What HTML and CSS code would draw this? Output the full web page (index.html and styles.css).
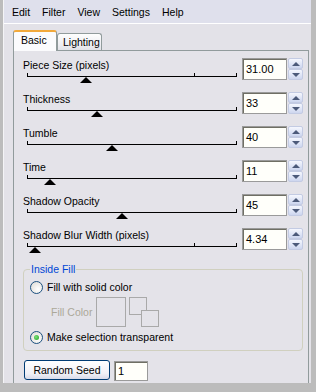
FILE: index.html
```html
<!DOCTYPE html>
<html lang="en">
<head>
    <meta charset="UTF-8">
    <title>Jigsaw Puzzle</title>
    <link rel="stylesheet" href="styles.css">
</head>
<body>

    <div class="window">
        <div class="menubar">
            <span class="menu">Edit</span>
            <span class="menu">Filter</span>
            <span class="menu">View</span>
            <span class="menu">Settings</span>
            <span class="menu">Help</span>
        </div>

        <div class="dialog">
            <div class="tabs">
                <div class="tab active">Basic</div>
                <div class="tab">Lighting</div>
            </div>

            <div class="panel">
                <div class="row">
                    <div class="control">
                        <div class="label">Piece Size (pixels)</div>
                        <div class="slider">
                            <span class="mid"></span>
                            <span class="thumb" style="left: 53px"></span>
                        </div>
                    </div>
                    <div class="field">31.00</div>
                    <div class="arrows"><span class="arrow up"></span><span class="arrow down"></span></div>
                </div>

                <div class="row">
                    <div class="control">
                        <div class="label">Thickness</div>
                        <div class="slider">
                            <span class="thumb" style="left: 64px"></span>
                        </div>
                    </div>
                    <div class="field">33</div>
                    <div class="arrows"><span class="arrow up"></span><span class="arrow down"></span></div>
                </div>

                <div class="row">
                    <div class="control">
                        <div class="label">Tumble</div>
                        <div class="slider">
                            <span class="thumb" style="left: 79px"></span>
                        </div>
                    </div>
                    <div class="field">40</div>
                    <div class="arrows"><span class="arrow up"></span><span class="arrow down"></span></div>
                </div>

                <div class="row">
                    <div class="control">
                        <div class="label">Time</div>
                        <div class="slider">
                            <span class="thumb" style="left: 17px"></span>
                        </div>
                    </div>
                    <div class="field">11</div>
                    <div class="arrows"><span class="arrow up"></span><span class="arrow down"></span></div>
                </div>

                <div class="row">
                    <div class="control">
                        <div class="label">Shadow Opacity</div>
                        <div class="slider">
                            <span class="thumb" style="left: 89px"></span>
                        </div>
                    </div>
                    <div class="field">45</div>
                    <div class="arrows"><span class="arrow up"></span><span class="arrow down"></span></div>
                </div>

                <div class="row">
                    <div class="control">
                        <div class="label">Shadow Blur Width (pixels)</div>
                        <div class="slider">
                            <span class="mid"></span>
                            <span class="thumb" style="left: 2px"></span>
                        </div>
                    </div>
                    <div class="field">4.34</div>
                    <div class="arrows"><span class="arrow up"></span><span class="arrow down"></span></div>
                </div>

                <fieldset class="group">
                    <legend>Inside Fill</legend>
                    <div class="option">
                        <span class="radio"></span>
                        <span>Fill with solid color</span>
                    </div>
                    <div class="fill-row">
                        <span class="fill-label">Fill Color</span>
                        <span class="swatch"></span>
                        <span class="pair">
                            <span class="small first"></span>
                            <span class="small second"></span>
                        </span>
                    </div>
                    <div class="option">
                        <span class="radio checked"></span>
                        <span>Make selection transparent</span>
                    </div>
                </fieldset>

                <div class="seed">
                    <div class="button">Random Seed</div>
                    <div class="seed-field">1</div>
                </div>
            </div>
        </div>
    </div>

</body>
</html>
```

FILE: styles.css
```css
* {
    box-sizing: border-box;
}

body {
    margin: 0;
    background: #bcbcbc;
    font-family: "Liberation Sans", Arial, sans-serif;
    font-size: 10.5px;
    color: #000;
    overflow: hidden;
}

.window {
    width: 308px;
    height: 383px;
    margin-left: 3px;
    border-left: 1px solid #f4f4f6;
    background: #e3e2e8;
    display: flex;
    flex-direction: column;
    overflow: hidden;
}

.menubar {
    height: 24px;
    flex: none;
    background: #dfe0ec;
    border-bottom: 1px solid #fff;
    display: flex;
    padding-left: 2px;
}

.menu {
    padding: 2px 6px 0;
    line-height: 21px;
}

.dialog {
    flex: none;
    padding: 6px 2px 0 9px;
    display: flex;
    flex-direction: column;
}

/* tabs */

.tabs {
    height: 20px;
    display: flex;
    align-items: flex-end;
}

.tab {
    height: 17px;
    width: 45px;
    padding-left: 5px;
    line-height: 16px;
    border: 1px solid #919b9c;
    border-bottom: none;
    border-radius: 3px 3px 0 0;
    background: linear-gradient(#fefefe, #f0f0f4 60%, #e2e2e8);
}

.tab.active {
    height: 21px;
    width: 44px;
    padding-left: 7px;
    margin-bottom: -1px;
    line-height: 17px;
    border-top: 2px solid #f2a93b;
    background: #fbfbfd;
    position: relative;
    z-index: 1;
}

.panel {
    width: 296px;
    height: 345px;
    border: 1px solid #919b9c;
    padding: 7px 5px 0 9px;
    background: #e4e3e9;
}

/* slider rows */

.row {
    display: flex;
    height: 34px;
}

.control {
    width: 219px;
}

.label {
    height: 14px;
    line-height: 14px;
    white-space: nowrap;
}

.slider {
    position: relative;
    width: 210px;
    height: 16px;
    margin: 4px 0 0 4px;
    border-top: 1px solid #000;
}

.slider::before,
.slider::after,
.mid {
    content: "";
    position: absolute;
    top: -4px;
    width: 1px;
    height: 3px;
    background: #000;
}

.slider::before {
    left: 0;
}

.slider::after {
    right: 0;
}

.mid {
    left: 167px;
}

.thumb {
    position: absolute;
    top: 0;
    width: 0;
    height: 0;
    border-left: 6px solid transparent;
    border-right: 6px solid transparent;
    border-bottom: 6px solid #000;
}

.field {
    width: 45px;
    height: 22px;
    padding-left: 3px;
    line-height: 20px;
    font-size: 11px;
    border: 1px solid #9a9a9a;
    box-shadow: inset 1px 1px 0 #6f6f64;
    background: #fffffa;
}

.arrows {
    width: 15px;
    height: 22px;
    margin-left: 1px;
    display: flex;
    flex-direction: column;
}

.arrow {
    height: 11px;
    display: flex;
    align-items: center;
    justify-content: center;
    border: 1px solid #c3cbe3;
    border-radius: 2px;
    background: linear-gradient(#f5f7fe, #cdd6ef);
}

.arrow::before {
    content: "";
    width: 0;
    height: 0;
    border-left: 4px solid transparent;
    border-right: 4px solid transparent;
}

.up::before {
    border-bottom: 4px solid #4c5a7a;
}

.down::before {
    border-top: 4px solid #4c5a7a;
}

/* inside fill group */

.group {
    width: 280px;
    margin: 0;
    padding: 0 6px 5px;
    border: 1px solid #d0d0bf;
    border-radius: 4px;
}

.group legend {
    padding: 0 1px;
    line-height: 14px;
    color: #0046d5;
}

.option {
    height: 16px;
    margin-top: 3px;
    display: flex;
    align-items: center;
    white-space: nowrap;
}

.option + .fill-row,
.fill-row + .option {
    margin-top: 2px;
}

.radio {
    width: 13px;
    height: 13px;
    margin-right: 4px;
    border: 1px solid #1c5180;
    border-radius: 50%;
    background: radial-gradient(circle at 65% 65%, #fff, #dcd9d2);
    display: flex;
    align-items: center;
    justify-content: center;
}

.radio.checked::before {
    content: "";
    width: 5px;
    height: 5px;
    border-radius: 50%;
    background: radial-gradient(circle at 40% 40%, #7be07b, #21a121);
}

.fill-row {
    height: 30px;
    display: flex;
    align-items: center;
}

.fill-label {
    width: 45px;
    margin-left: 21px;
    color: #aca899;
}

.swatch {
    width: 30px;
    height: 30px;
    border: 1px solid #a9a9a9;
}

.pair {
    position: relative;
    width: 30px;
    height: 30px;
    margin-left: 3px;
}

.small {
    position: absolute;
    border: 1px solid #a9a9a9;
    background: #e4e3e9;
}

.first {
    left: 0;
    top: 0;
    width: 18px;
    height: 18px;
}

.second {
    left: 12px;
    top: 13px;
    width: 18px;
    height: 17px;
}

/* seed */

.seed {
    margin-top: 9px;
    display: flex;
    align-items: flex-start;
}

.button {
    width: 86px;
    height: 20px;
    margin-left: 1px;
    line-height: 18px;
    text-align: center;
    border: 1px solid #003c74;
    border-radius: 3px;
    background: linear-gradient(#ffffff, #f0f0f6 70%, #d8dae8);
}

.seed-field {
    width: 34px;
    height: 20px;
    margin: 1px 0 0 4px;
    padding-left: 3px;
    line-height: 18px;
    font-size: 11px;
    border: 1px solid #9a9a9a;
    box-shadow: inset 1px 1px 0 #6f6f64;
    background: #fffffa;
}
```
